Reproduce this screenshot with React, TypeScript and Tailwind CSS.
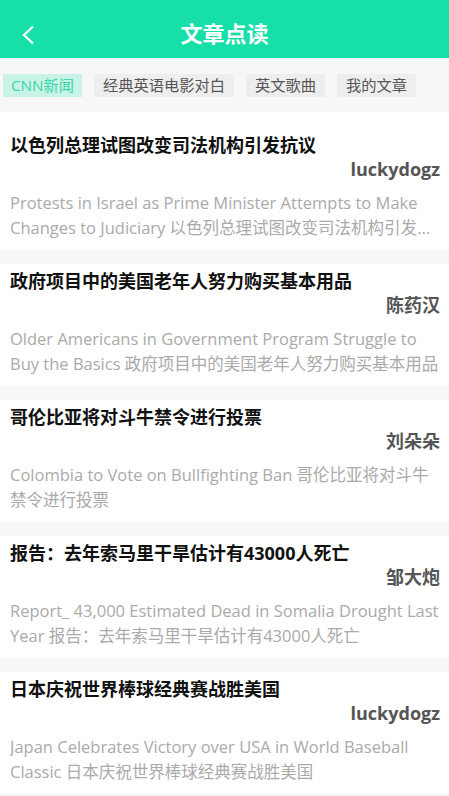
import React from "react";

const font = { fontFamily: '"Open Sans", "Noto Sans CJK SC", sans-serif' };

const tabs = ["CNN新闻", "经典英语电影对白", "英文歌曲", "我的文章"];

const articles = [
  {
    title: "以色列总理试图改变司法机构引发抗议",
    author: "luckydogz",
    desc: "Protests in Israel as Prime Minister Attempts to Make Changes to Judiciary 以色列总理试图改变司法机构引发抗议",
  },
  {
    title: "政府项目中的美国老年人努力购买基本用品",
    author: "陈药汉",
    desc: "Older Americans in Government Program Struggle to Buy the Basics 政府项目中的美国老年人努力购买基本用品",
  },
  {
    title: "哥伦比亚将对斗牛禁令进行投票",
    author: "刘朵朵",
    desc: "Colombia to Vote on Bullfighting Ban 哥伦比亚将对斗牛禁令进行投票",
  },
  {
    title: "报告：去年索马里干旱估计有43000人死亡",
    author: "邹大炮",
    desc: "Report_ 43,000 Estimated Dead in Somalia Drought Last Year 报告：去年索马里干旱估计有43000人死亡",
  },
  {
    title: "日本庆祝世界棒球经典赛战胜美国",
    author: "luckydogz",
    desc: "Japan Celebrates Victory over USA in World Baseball Classic 日本庆祝世界棒球经典赛战胜美国",
  },
];

const ArticleCard = ({ title, author, desc }: { title: string; author: string; desc: string }) => (
  <div className="bg-white pl-[10px] pt-[5px] pb-[9px]">
    <div className="text-[18px] leading-[24px] font-bold text-[#111]">{title}</div>
    <div className="text-right pr-[9px] text-[18px] leading-[24px] font-bold text-[#555]">{author}</div>
    <p className="mt-[9px] pr-[4px] text-[16.5px] leading-[25px] text-[#aaa] line-clamp-2">{desc}</p>
  </div>
);

export default function App() {
  return (
    <div className="w-[449px] h-[796px] overflow-hidden bg-[#f7f7f7]" style={font}>
      {/* Header */}
      <div className="h-[58px] bg-[#17dfa8] flex items-center relative">
        <svg className="absolute left-[21px] top-[25px]" width="14" height="20" viewBox="0 0 14 20" fill="none">
          <path d="M12 1.5L3 10l9 8.5" stroke="white" strokeWidth="2.2" />
        </svg>
        <h1 className="flex-1 text-center text-white text-[22px] font-bold pt-[8px]">文章点读</h1>
      </div>

      {/* Tabs */}
      <div className="flex gap-[12px] px-[3px] pt-[16px] pb-[15px]">
        {tabs.map((t, i) => (
          <span
            key={t}
            className={
              i === 0
                ? "h-[23px] px-[8px] flex items-center text-[15.25px] bg-[#c9f3e7] text-[#3bd6a6]"
                : "h-[23px] px-[9px] flex items-center text-[15.25px] bg-[#eeeeee] text-[#555]"
            }
          >
            {t}
          </span>
        ))}
      </div>

      {/* List */}
      <div className="bg-white pt-[16px]">
        <div className="flex flex-col gap-[15px] bg-[#f7f7f7]">
          {articles.map((a) => (
            <ArticleCard key={a.title} {...a} />
          ))}
        </div>
      </div>
    </div>
  );
}
